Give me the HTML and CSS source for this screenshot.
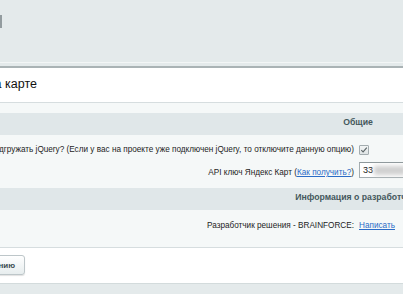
FILE: index.html
```html
<!DOCTYPE html>
<html lang="ru">

<head>
    <meta charset="UTF-8">
    <meta name="viewport" content="width=device-width, initial-scale=1.0">
    <title>Настройки модуля - Магазины на карте</title>
    <link rel="stylesheet" href="styles.css">
</head>

<body>

    <div class="page">
        <div class="topbar">
            <div class="topbar-tool"></div>
        </div>

        <div class="frame">
            <h1 class="title">Магазины на карте</h1>

            <div class="tab-body">
                <table class="edit-table">
                    <colgroup>
                        <col>
                        <col>
                    </colgroup>
                    <tbody>
                        <tr class="heading">
                            <td colspan="2">Общие</td>
                        </tr>
                        <tr class="row-check">
                            <td class="label">Подгружать jQuery? (Если у вас на проекте уже подключен jQuery, то отключите данную опцию)</td>
                            <td class="field">
                                <span class="checkbox">
                                    <svg width="8" height="8" viewBox="0 0 8 8">
                                        <path d="M1.3 4.1 L3.1 5.9 L6.8 1.7" fill="none" stroke="#5a6366" stroke-width="1.1"/>
                                    </svg>
                                </span>
                            </td>
                        </tr>
                        <tr class="row-input">
                            <td class="label">API ключ Яндекс Карт (<a href="#">Как получить?</a>)</td>
                            <td class="field">
                                <span class="input">33<span class="input-blur"></span></span>
                            </td>
                        </tr>
                        <tr class="heading">
                            <td colspan="2">Информация о разработчике</td>
                        </tr>
                        <tr class="row-dev">
                            <td class="label">Разработчик решения - BRAINFORCE:</td>
                            <td class="field"><a href="#">Написать</a></td>
                        </tr>
                    </tbody>
                </table>
            </div>

            <div class="buttons">
                <button class="btn btn-save">Сохранить</button>
                <button class="btn">Применить</button>
                <button class="btn">По умолчанию</button>
            </div>
        </div>

        <div class="footer"></div>
    </div>

</body>

</html>
```

FILE: styles.css
```css
body {
    font-family: "Liberation Sans", Arial, sans-serif;
    margin: 0;
    overflow: hidden;
    background-color: #e4eaeb;
    color: #000;
}

/* the screenshot is cropped: page starts left of the window */
.page {
    width: 1116px;
    margin-left: -200px;
}

.topbar {
    height: 47px;
    padding-top: 15px;
    border-bottom: 1px solid #f3f6f6;
    margin-bottom: 3px;
}

.topbar-tool {
    width: 200px;
    height: 13px;
    border-right: 2px solid #939c9f;
}

.frame {
    background-color: #ffffff;
    border-top: 2px solid #aab3b5;
}

.title {
    margin: 0;
    padding: 9px 0 11px 127px;
    font-size: 12.5px;
    line-height: 14px;
    font-weight: normal;
    color: #111;
    border-bottom: 1px solid #d6dddf;
}

.tab-body {
    background-color: #f5f8f8;
    padding-top: 10px;
    border-bottom: 1px solid #d6dddf;
}

.edit-table {
    width: 100%;
    border-collapse: collapse;
    table-layout: fixed;
    font-size: 8.2px;
    line-height: 10px;
}

col:nth-child(1) { width: 50%; }
col:nth-child(2) { width: 50%; }

.edit-table td {
    padding: 0;
    vertical-align: top;
}

/* Section headings */
.heading td {
    background-color: #e0e7e9;
    text-align: center;
    font-weight: bold;
    font-size: 8.7px;
    color: #44575c;
    padding: 4px 0 8px;
}

.label {
    text-align: right;
    padding-right: 4px !important;
    white-space: nowrap;
    color: #1d1d1d;
}

.field {
    padding-left: 1px !important;
}

.row-check .label { padding-top: 10px; padding-bottom: 3px; }
.row-check .field { padding-top: 10px; }

.row-input .label { padding-top: 10px; padding-bottom: 10px; }
.row-input .field { padding-top: 4px; }

.row-dev .label,
.row-dev .field { padding-top: 11px; padding-bottom: 16px; }

a {
    color: #2b6cc7;
    text-decoration: underline;
}

.checkbox {
    display: flex;
    align-items: center;
    justify-content: center;
    width: 8px;
    height: 8px;
    border: 1px solid #a3acaf;
    border-radius: 1px;
    background: linear-gradient(#f3f5f5, #dfe4e5);
}

.input {
    display: flex;
    align-items: center;
    width: 200px;
    height: 14px;
    padding-left: 3px;
    border: 1px solid #a4adb0;
    border-top-color: #8e989b;
    background-color: #fff;
    font-size: 9px;
    color: #222;
}

.input-blur {
    display: inline-block;
    width: 32px;
    height: 9px;
    margin-left: 1px;
    background-color: #d0d0d0;
    filter: blur(2px);
}

/* Bottom button bar */
.buttons {
    display: flex;
    gap: 6px;
    padding: 7px 0 8px 0;
    justify-content: flex-end;
    width: 225px;
}

.btn {
    height: 20px;
    padding: 0 9px;
    font-family: inherit;
    font-size: 8px;
    font-weight: bold;
    color: #3c4d52;
    background: linear-gradient(#ffffff, #e7edee);
    border: 1px solid #bdc6c9;
    border-radius: 3px;
    box-shadow: 0 1px 1px rgba(0, 0, 0, 0.12);
}

.btn-save {
    color: #fff;
    background: linear-gradient(#9fcb50, #7bb02c);
    border-color: #79a63b;
}

.footer {
    height: 11px;
    border-top: 1px solid #d3dbdc;
    background-color: #e4eaeb;
}
```
